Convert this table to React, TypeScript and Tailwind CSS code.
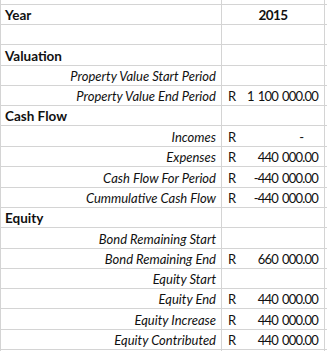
import React from "react";

type Row = {
  label: string;
  kind: "head" | "item" | "blank";
  h: number;
  value?: string;
  rand?: boolean;
};

const rows: Row[] = [
  { label: "Year", kind: "head", h: 20, value: "2015" },
  { label: "", kind: "blank", h: 20 },
  { label: "Valuation", kind: "head", h: 21 },
  { label: "Property Value Start Period", kind: "item", h: 20 },
  { label: "Property Value End Period", kind: "item", h: 20, rand: true, value: "1 100 000.00" },
  { label: "Cash Flow", kind: "head", h: 20 },
  { label: "Incomes", kind: "item", h: 21, rand: true, value: "-" },
  { label: "Expenses", kind: "item", h: 20, rand: true, value: "440 000.00" },
  { label: "Cash Flow For Period", kind: "item", h: 21, rand: true, value: "-440 000.00" },
  { label: "Cummulative Cash Flow", kind: "item", h: 20, rand: true, value: "-440 000.00" },
  { label: "Equity", kind: "head", h: 20 },
  { label: "Bond Remaining Start", kind: "item", h: 21 },
  { label: "Bond Remaining End", kind: "item", h: 20, rand: true, value: "660 000.00" },
  { label: "Equity Start", kind: "item", h: 20 },
  { label: "Equity End", kind: "item", h: 20, rand: true, value: "440 000.00" },
  { label: "Equity Increase", kind: "item", h: 21, rand: true, value: "440 000.00" },
  { label: "Equity Contributed", kind: "item", h: 20, rand: true, value: "440 000.00" },
];

const heights: Record<number, string> = {
  20: "h-[20px]",
  21: "h-[21px]",
};

// one spreadsheet row: label cell, value cell, and the sliver of the next column
const Cells: React.FC<{ children?: React.ReactNode; right?: React.ReactNode; h: string; top?: boolean }> = ({
  children,
  right,
  h,
  top = true,
}) => (
  <div className={`flex ${h} ${top ? "border-t border-[#d4d4d4]" : ""}`}>
    <div className="w-[222px] shrink-0 border-x border-[#d4d4d4] flex items-end pb-[2px]">{children}</div>
    <div className="w-[103px] shrink-0 border-r border-[#d4d4d4] flex items-end pb-[2px]">{right}</div>
    <div className="flex-1" />
  </div>
);

export default function App() {
  return (
    <div className="w-[327px] h-[351px] overflow-hidden bg-white text-[#111] font-['Lato',sans-serif] text-[13px] leading-none">
      <Cells h="h-[4px]" top={false} />
      {rows.map((r, i) => {
        let left: React.ReactNode = null;
        if (r.kind === "head") left = <span className="pl-[4px] font-bold text-[13.5px]">{r.label}</span>;
        if (r.kind === "item") left = <span className="w-full text-right pr-[5px] italic">{r.label}</span>;
        let right: React.ReactNode = null;
        if (r.kind === "head" && r.value)
          right = <span className="w-full text-center font-bold tracking-[-0.6px] text-[13.5px]">{r.value}</span>;
        if (r.rand)
          right = (
            <div className="w-full flex justify-between pl-[6px] pr-[6px]">
              <span>R</span>
              <span className={r.value === "-" ? "pr-[14px]" : "tracking-[-0.8px] [word-spacing:1.5px]"}>{r.value}</span>
            </div>
          );
        return (
          <Cells key={i} h={heights[r.h]} right={right}>
            {left}
          </Cells>
        );
      })}
      <Cells h="h-[3px]" />
    </div>
  );
}
